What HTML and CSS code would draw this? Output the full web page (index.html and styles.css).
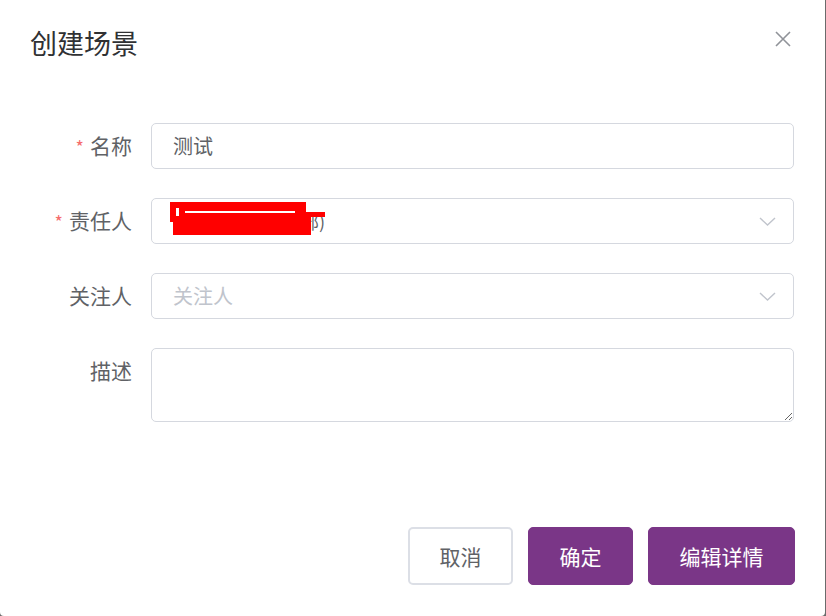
FILE: index.html
```html
<!DOCTYPE html>
<html lang="zh">
<head>
<meta charset="utf-8">
<title>创建场景</title>
<link rel="stylesheet" href="styles.css">
</head>
<body>
<div class="dialog">
  <div class="dialog-header">
    <span class="dialog-title">创建场景</span>
    <button class="close-btn" aria-label="关闭">
      <svg width="16" height="16" viewBox="0 0 16 16"><path d="M1 1L15 15M15 1L1 15" stroke="#909399" stroke-width="1.6" fill="none"/></svg>
    </button>
  </div>
  <form class="form">
    <div class="form-row">
      <label class="form-label"><span class="req">*</span>名称</label>
      <div class="field">
        <div class="input">测试</div>
      </div>
    </div>
    <div class="form-row">
      <label class="form-label"><span class="req">*</span>责任人</label>
      <div class="field">
        <div class="input select">
          <span class="value-text">部)</span>
          <span class="redact redact-a"><i class="mark-bar"></i><i class="mark-line"></i></span>
          <span class="redact redact-b"></span>
          <span class="redact redact-c"></span>
          <svg class="chevron" width="17" height="9" viewBox="0 0 17 9"><path d="M1 1L8.5 8L16 1" stroke="#c0c4cc" stroke-width="1.4" fill="none"/></svg>
        </div>
      </div>
    </div>
    <div class="form-row">
      <label class="form-label">关注人</label>
      <div class="field">
        <div class="input select placeholder">
          <span>关注人</span>
          <svg class="chevron" width="17" height="9" viewBox="0 0 17 9"><path d="M1 1L8.5 8L16 1" stroke="#c0c4cc" stroke-width="1.4" fill="none"/></svg>
        </div>
      </div>
    </div>
    <div class="form-row">
      <label class="form-label">描述</label>
      <div class="field">
        <textarea class="textarea"></textarea>
      </div>
    </div>
  </form>
  <div class="dialog-footer">
    <button class="btn btn-default btn-cancel">取消</button>
    <button class="btn btn-primary btn-ok">确定</button>
    <button class="btn btn-primary btn-detail">编辑详情</button>
  </div>
</div>
</body>
</html>
```

FILE: styles.css
```css
html, body {
  margin: 0;
  padding: 0;
}
body {
  width: 826px;
  height: 616px;
  background: #6b6b6b;
  font-family: "Noto Sans CJK SC", "Noto Sans", sans-serif;
  overflow: hidden;
}
.dialog {
  width: 825px;
  height: 616px;
  background: #ffffff;
  border-radius: 0 0 4px 4px;
  display: flex;
  flex-direction: column;
  box-sizing: border-box;
}
.dialog-header {
  height: 88px;
  display: flex;
  align-items: center;
  justify-content: space-between;
  padding: 0 34px 0 30px;
  box-sizing: border-box;
}
.dialog-title {
  font-size: 27px;
  color: #303133;
  line-height: 34px;
  margin-top: -2px;
}
.close-btn {
  background: none;
  border: 0;
  padding: 0;
  width: 16px;
  height: 16px;
  margin-top: -10px;
  display: flex;
}
.form {
  margin: 35px 0 0;
  padding-right: 31px;
}
.form-row {
  display: flex;
  align-items: flex-start;
  margin-bottom: 29px;
}
.form-label {
  width: 151px;
  height: 46px;
  padding-right: 19px;
  box-sizing: border-box;
  text-align: right;
  font-size: 21px;
  line-height: 44px;
  color: #606266;
  flex-shrink: 0;
  white-space: nowrap;
}
.req {
  color: #f56c6c;
  margin-right: 6px;
  font-size: 18px;
  line-height: 1;
}
.field {
  flex: 1;
}
.input {
  position: relative;
  height: 46px;
  border: 1px solid #d5d8df;
  border-radius: 5px;
  box-sizing: border-box;
  padding: 0 21px;
  font-size: 20px;
  line-height: 44px;
  color: #606266;
}
.select {
  display: flex;
  align-items: center;
}
.placeholder {
  color: #c0c4cc;
}
.chevron {
  position: absolute;
  right: 17px;
  top: 18px;
}
.value-text {
  position: absolute;
  left: 149px;
  top: 0;
  font-size: 18px;
  color: #606266;
}
.redact {
  position: absolute;
  background: #ff0000;
}
.redact-a {
  left: 18px;
  top: 3px;
  width: 136px;
  height: 20px;
}
.redact-b {
  left: 21px;
  top: 18px;
  width: 138px;
  height: 18px;
}
.redact-c {
  left: 153px;
  top: 13px;
  width: 20px;
  height: 5px;
}
.mark-bar {
  position: absolute;
  left: 6px;
  top: 6px;
  width: 3px;
  height: 8px;
  background: #ffffff;
}
.mark-line {
  position: absolute;
  left: 15px;
  top: 9px;
  width: 110px;
  height: 2px;
  background: #ffffff;
}
.textarea {
  display: block;
  width: 100%;
  height: 74px;
  border: 1px solid #d5d8df;
  border-radius: 5px;
  box-sizing: border-box;
  resize: vertical;
  font-family: inherit;
  font-size: 20px;
  padding: 6px 21px;
  outline: none;
}
.dialog-footer {
  margin-top: auto;
  margin-bottom: 31px;
  display: flex;
  justify-content: flex-end;
  gap: 15px;
  padding-right: 30px;
}
.btn {
  height: 58px;
  padding: 0;
  border-radius: 5px;
  font-family: inherit;
  font-size: 21px;
  box-sizing: border-box;
  cursor: pointer;
}
.btn-cancel {
  width: 105px;
}
.btn-ok {
  width: 105px;
}
.btn-detail {
  width: 147px;
}
.btn-default {
  background: #ffffff;
  border: 2px solid #dcdfe6;
  color: #606266;
}
.btn-primary {
  background: #7a3687;
  border: 1px solid #7a3687;
  color: #ffffff;
}
```
